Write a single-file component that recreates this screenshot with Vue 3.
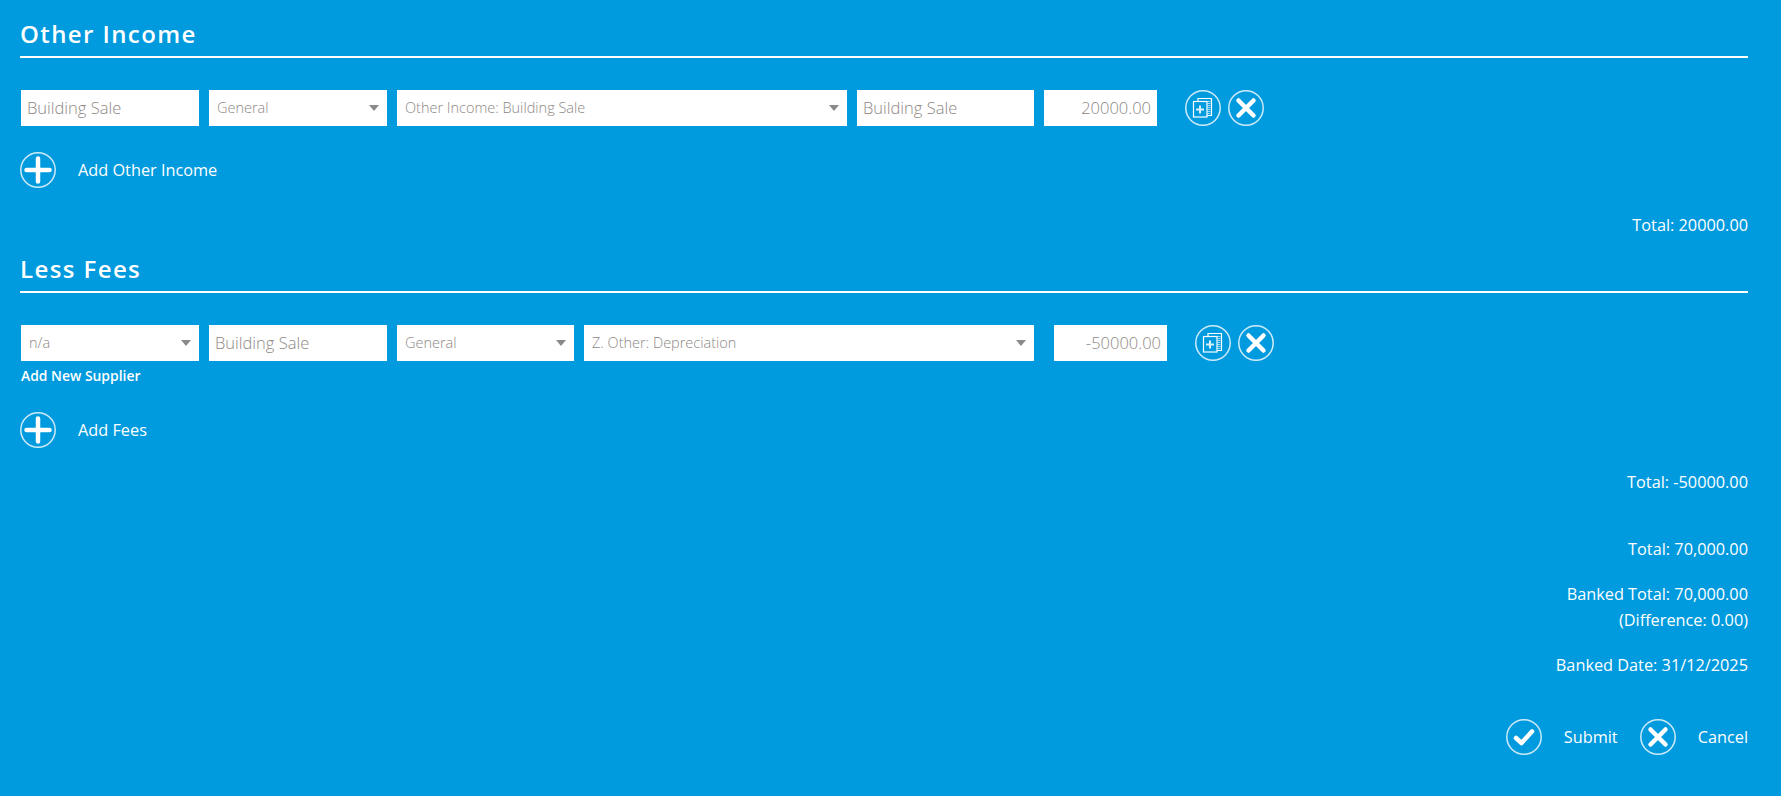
<template>
  <div class="page">
    <section class="section">
      <h2 class="heading">Other Income</h2>
      <div class="row">
        <input class="field" placeholder="Building Sale" />
        <div class="field select"><span>General</span><i class="caret"></i></div>
        <div class="field select wide"><span>Other Income: Building Sale</span><i class="caret"></i></div>
        <input class="field short" placeholder="Building Sale" />
        <input class="field amount" placeholder="20000.00" />
        <div class="row-actions">
          <button class="icon-btn" aria-label="Copy">
            <svg width="36" height="36" viewBox="0 0 36 36">
              <circle cx="18" cy="18" r="17.2" class="ring" />
              <path d="M13 11V8.5h13.5v17H22" class="thin" />
              <path d="M22.5 11.5h3M22.5 13.5h3M22.5 15.5h3M22.5 17.5h3M22.5 19.5h3M22.5 21.5h3M22.5 23.5h3" class="hair" />
              <rect x="8.5" y="11.5" width="13.5" height="15.5" class="thin" />
              <path d="M15 15.5v8M11 19.5h8" class="plus-small" />
            </svg>
          </button>
          <button class="icon-btn" aria-label="Remove">
            <svg width="36" height="36" viewBox="0 0 36 36">
              <circle cx="18" cy="18" r="17.2" class="ring" />
              <path d="M10.5 10.5l15 15M25.5 10.5l-15 15" class="bold" />
            </svg>
          </button>
        </div>
      </div>
      <div class="add-row">
        <svg width="36" height="36" viewBox="0 0 36 36">
          <circle cx="18" cy="18" r="17.2" class="ring" />
          <path d="M18 6.5v23M6.5 18h23" class="bold" />
        </svg>
        <span>Add Other Income</span>
      </div>
      <p class="total first-total">Total: 20000.00</p>
    </section>

    <section class="section">
      <h2 class="heading">Less Fees</h2>
      <div class="row">
        <div class="supplier">
          <div class="field select"><span>n/a</span><i class="caret"></i></div>
          <a class="supplier-link">Add New Supplier</a>
        </div>
        <input class="field" placeholder="Building Sale" />
        <div class="field select short"><span>General</span><i class="caret"></i></div>
        <div class="field select wide"><span>Z. Other: Depreciation</span><i class="caret"></i></div>
        <input class="field amount offset" placeholder="-50000.00" />
        <div class="row-actions">
          <button class="icon-btn" aria-label="Copy">
            <svg width="36" height="36" viewBox="0 0 36 36">
              <circle cx="18" cy="18" r="17.2" class="ring" />
              <path d="M13 11V8.5h13.5v17H22" class="thin" />
              <path d="M22.5 11.5h3M22.5 13.5h3M22.5 15.5h3M22.5 17.5h3M22.5 19.5h3M22.5 21.5h3M22.5 23.5h3" class="hair" />
              <rect x="8.5" y="11.5" width="13.5" height="15.5" class="thin" />
              <path d="M15 15.5v8M11 19.5h8" class="plus-small" />
            </svg>
          </button>
          <button class="icon-btn" aria-label="Remove">
            <svg width="36" height="36" viewBox="0 0 36 36">
              <circle cx="18" cy="18" r="17.2" class="ring" />
              <path d="M10.5 10.5l15 15M25.5 10.5l-15 15" class="bold" />
            </svg>
          </button>
        </div>
      </div>
      <div class="add-row fees">
        <svg width="36" height="36" viewBox="0 0 36 36">
          <circle cx="18" cy="18" r="17.2" class="ring" />
          <path d="M18 6.5v23M6.5 18h23" class="bold" />
        </svg>
        <span>Add Fees</span>
      </div>
      <p class="total fee-total">Total: -50000.00</p>
    </section>

    <div class="summary">
      <p class="total">Total: 70,000.00</p>
      <p class="total banked">Banked Total: 70,000.00</p>
      <p class="total diff">(Difference: 0.00)</p>
      <p class="total date">Banked Date: 31/12/2025</p>
    </div>

    <div class="footer">
      <svg width="36" height="36" viewBox="0 0 36 36">
        <circle cx="18" cy="18" r="17.2" class="ring" />
        <path d="M10 19l5.5 5L26 12.5" class="bold" />
      </svg>
      <span class="footer-label">Submit</span>
      <svg width="36" height="36" viewBox="0 0 36 36">
        <circle cx="18" cy="18" r="17.2" class="ring" />
        <path d="M10.5 10.5l15 15M25.5 10.5l-15 15" class="bold" />
      </svg>
      <span class="footer-label">Cancel</span>
    </div>
  </div>
</template>

<script setup>
</script>

<style>
html,
body {
  margin: 0;
  background: #009ade;
}
</style>

<style scoped>
.page {
  min-height: 796px;
  box-sizing: border-box;
  padding: 0 33px 0 20px;
  background: #009ade;
  color: #fff;
  font-family: "Open Sans", "Noto Sans", sans-serif;
  font-size: 16.3px;
  font-weight: 400;
}

.heading {
  height: 56px;
  margin: 0;
  border-bottom: 2px solid #fff;
  font-size: 24px;
  font-weight: 600;
  letter-spacing: 1.4px;
  line-height: 68px;
}

.row {
  display: flex;
  align-items: flex-start;
  gap: 10px;
  margin-top: 32px;
  padding-left: 1px;
}

.field {
  display: flex;
  align-items: center;
  flex: none;
  width: 178px;
  height: 36px;
  box-sizing: border-box;
  padding: 0 6px 2px;
  border: 0;
  border-radius: 0;
  outline: 0;
  background: #fff;
  color: #8e8884;
  font-family: inherit;
  font-size: 16.5px;
  font-weight: 300;
}

.field::placeholder {
  color: #8e8884;
  opacity: 1;
}

.select {
  position: relative;
  padding-left: 8px;
  font-size: 14.5px;
  font-weight: 300;
}

.short {
  width: 177px;
}

.wide {
  width: 450px;
}

.amount {
  width: 113px;
  text-align: right;
}

.offset {
  margin-left: 10px;
}

.caret {
  position: absolute;
  top: 15px;
  right: 8px;
  border-top: 6px solid #8a8a8a;
  border-right: 5.5px solid transparent;
  border-left: 5.5px solid transparent;
}

.supplier {
  display: flex;
  flex-direction: column;
}

.supplier-link {
  margin-top: 5px;
  font-size: 13.9px;
  font-weight: 600;
  line-height: 20px;
}

.row-actions {
  display: flex;
  gap: 7px;
  margin-left: 18px;
}

.icon-btn {
  width: 36px;
  height: 36px;
  padding: 0;
  border: 0;
  background: none;
}

svg {
  display: block;
  flex: none;
}

.ring {
  fill: none;
  stroke: #fff;
  stroke-width: 1.5;
  opacity: 0.8;
}

.bold {
  fill: none;
  stroke: #fff;
  stroke-width: 4.5;
  stroke-linecap: round;
  stroke-linejoin: round;
}

.thin {
  fill: none;
  stroke: #fff;
  stroke-width: 1.2;
}

.hair {
  fill: none;
  stroke: #fff;
  stroke-width: 0.8;
  opacity: 0.8;
}

.plus-small {
  fill: none;
  stroke: #d8f0fb;
  stroke-width: 2;
}

.add-row {
  display: flex;
  align-items: center;
  gap: 22px;
  margin-top: 26px;
}

.total {
  margin: 0;
  line-height: 24px;
  text-align: right;
}

.first-total {
  height: 20px;
  margin-top: 25px;
  margin-bottom: 2px;
}

.fee-total {
  margin-top: 22px;
}

.summary {
  margin-top: 43px;
}

.banked {
  margin-top: 21px;
}

.diff {
  margin-top: 2px;
}

.date {
  margin-top: 21px;
}

.footer {
  display: flex;
  align-items: center;
  justify-content: flex-end;
  margin-top: 42px;
}

.footer-label {
  margin-left: 22px;
}

.footer-label + svg {
  margin-left: 22px;
}
</style>
